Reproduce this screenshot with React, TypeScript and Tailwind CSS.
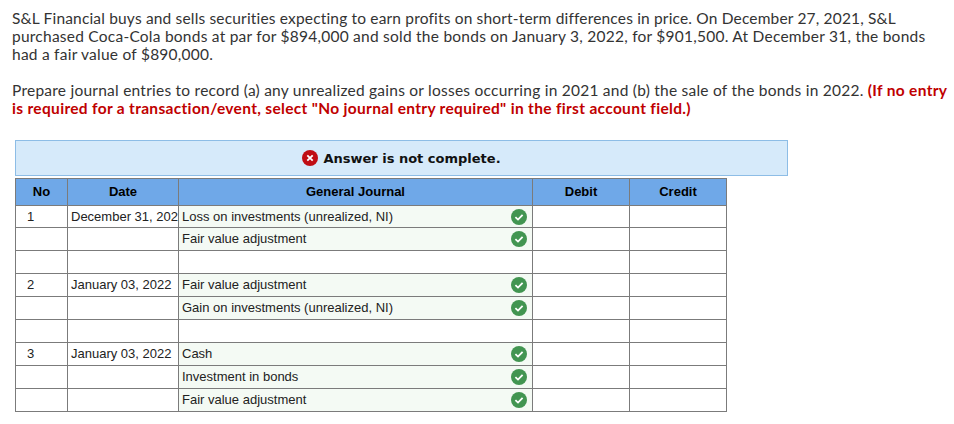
import React from "react";

const Check = () => (
  <svg width="16" height="16" viewBox="0 0 16 16" className="block">
    <circle cx="8" cy="8" r="8" fill="#429551" />
    <path d="M4.4 8.2 L7 10.6 L11.6 5.8" fill="none" stroke="#fff" strokeWidth="1.8" />
  </svg>
);

const Cross = () => (
  <svg width="16" height="16" viewBox="0 0 16 16" className="block">
    <circle cx="8" cy="8" r="8" fill="#c00d14" />
    <path d="M5.3 5.3 L10.7 10.7 M10.7 5.3 L5.3 10.7" fill="none" stroke="#fff" strokeWidth="1.8" />
  </svg>
);

type Row = { no?: string; date?: string; account?: string; ok?: boolean; h: string };

const rows: Row[] = [
  { no: "1", date: "December 31, 2021", account: "Loss on investments (unrealized, NI)", ok: true, h: "h-[22px]" },
  { account: "Fair value adjustment", ok: true, h: "h-[23px]" },
  { h: "h-[23px]" },
  { no: "2", date: "January 03, 2022", account: "Fair value adjustment", ok: true, h: "h-[23px]" },
  { account: "Gain on investments (unrealized, NI)", ok: true, h: "h-[23px]" },
  { h: "h-[23px]" },
  { no: "3", date: "January 03, 2022", account: "Cash", ok: true, h: "h-[23px]" },
  { account: "Investment in bonds", ok: true, h: "h-[23px]" },
  { account: "Fair value adjustment", ok: true, h: "h-[23px]" },
];

const cell = "border border-[#7b7b7b] p-0";

export default function App() {
  return (
    <div className="w-[954px] h-[424px] bg-white overflow-hidden pt-[9px]">
      <div className="pl-[12px] text-[15.5px] leading-[18px] tracking-[0.24px] text-[#333] font-['Lato',sans-serif]">
        <p>
          <span className="tracking-[0.17px]">
            S&amp;L Financial buys and sells securities expecting to earn profits on short-term differences in price. On December 27, 2021, S&amp;L
          </span>
          <br />
          purchased Coca-Cola bonds at par for $894,000 and sold the bonds on January 3, 2022, for $901,500. At December 31, the bonds
          <br />
          had a fair value of $890,000.
        </p>
        <p className="mt-[18px]">
          Prepare journal entries to record (a) any unrealized gains or losses occurring in 2021 and (b) the sale of the bonds in 2022.{" "}
          <b className="text-[#c00000] font-bold tracking-[0.32px]">
            (If no entry
            <br />
            is required for a transaction/event, select "No journal entry required" in the first account field.)
          </b>
        </p>
      </div>

      <div className="ml-[15px] mt-[23px] w-[773px] h-[36px] bg-[#d6eafa] border border-[#8dbde6] flex items-center justify-center gap-[5px]">
        <Cross />
        <span className="pt-[1px] font-['DejaVu_Sans',sans-serif] font-bold text-[13px] text-[#111]">Answer is not complete.</span>
      </div>

      <table className="ml-[15px] mt-[2px] w-[712px] table-fixed border-collapse font-['Liberation_Sans',sans-serif] text-[13px] text-[#222]">
        <colgroup>
          <col className="w-[52px]" />
          <col className="w-[111px]" />
          <col className="w-[354px]" />
          <col className="w-[97px]" />
          <col className="w-[97px]" />
        </colgroup>
        <thead>
          <tr className="h-[27px] bg-[#6fa8e8] font-bold text-black">
            <th className={cell}>No</th>
            <th className={cell}>Date</th>
            <th className={cell}>General Journal</th>
            <th className={cell}>Debit</th>
            <th className={cell}>Credit</th>
          </tr>
        </thead>
        <tbody>
          {rows.map((r, i) => (
            <tr key={i} className={r.h}>
              <td className={`${cell} text-center pr-[22px]`}>{r.no}</td>
              <td className={`${cell} whitespace-nowrap overflow-hidden pl-[3px]`}>{r.date}</td>
              <td className={`${cell} pl-[3px] pr-[5px] ${r.ok ? "bg-[#f4faf4]" : ""}`}>
                <div className="flex items-center justify-between">
                  <span>{r.account}</span>
                  {r.ok && <Check />}
                </div>
              </td>
              <td className={cell}></td>
              <td className={cell}></td>
            </tr>
          ))}
        </tbody>
      </table>
    </div>
  );
}
